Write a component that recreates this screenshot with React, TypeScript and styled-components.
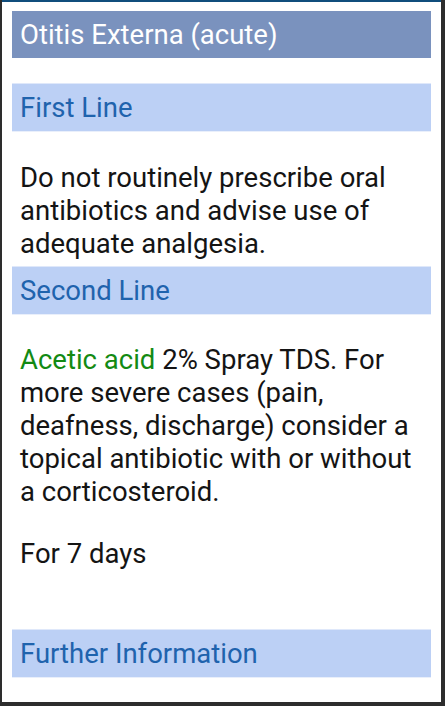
import React from "react";
import styled, { createGlobalStyle } from "styled-components";

const Global = createGlobalStyle`
  html, body {
    margin: 0;
    padding: 0;
    background: #2d2d2d;
    width: 445px;
    height: 706px;
    overflow: hidden;
  }
  body {
    font-family: Roboto, "Noto Sans", "Liberation Sans", sans-serif;
  }
`;

const Screen = styled.div`
  width: 445px;
  height: 706px;
  display: flex;
  align-items: flex-start;
  padding-left: 2px;
  box-sizing: border-box;
`;

const Panel = styled.div`
  width: 439px;
  height: 702px;
  box-sizing: border-box;
  background: #ffffff;
  border-top: 2px solid #104d7c;
  padding: 9px 10px 0 10px;
  display: flex;
  flex-direction: column;
`;

const TitleBar = styled.div`
  height: 47px;
  line-height: 47px;
  background: #7a92be;
  color: #ffffff;
  font-size: 27.5px;
  padding: 0 8px;
  white-space: nowrap;
  margin-bottom: 25px;
`;

const SectionBar = styled.div`
  height: 47px;
  line-height: 47px;
  background: #bcd0f5;
  border-top: 1px solid #dfe8fa;
  border-bottom: 1px solid #e9effb;
  color: #1f63ad;
  font-size: 27.5px;
  padding: 0 8px;
  white-space: nowrap;
`;

const Body = styled.div<{ $top: number; $bottom: number }>`
  padding: ${(p) => p.$top}px 8px ${(p) => p.$bottom}px 8px;
  display: flex;
  flex-direction: column;
  gap: 29px;
`;

const Para = styled.p`
  margin: 0;
  font-size: 27.5px;
  line-height: 33px;
  color: #141414;
`;

const Drug = styled.span`
  color: #138a13;
`;

export default function App() {
  return (
    <>
      <Global />
      <Screen>
        <Panel>
          <TitleBar>Otitis Externa (acute)</TitleBar>
          <SectionBar>First Line</SectionBar>
          <Body $top={29} $bottom={6}>
            <Para>
              Do not routinely prescribe oral antibiotics and advise use of
              adequate analgesia.
            </Para>
          </Body>
          <SectionBar>Second Line</SectionBar>
          <Body $top={28} $bottom={59}>
            <Para>
              <Drug>Acetic acid</Drug> 2% Spray TDS. For more severe cases
              (pain, deafness, discharge) consider a topical antibiotic with or
              without a corticosteroid.
            </Para>
            <Para>For 7 days</Para>
          </Body>
          <SectionBar>Further Information</SectionBar>
        </Panel>
      </Screen>
    </>
  );
}
